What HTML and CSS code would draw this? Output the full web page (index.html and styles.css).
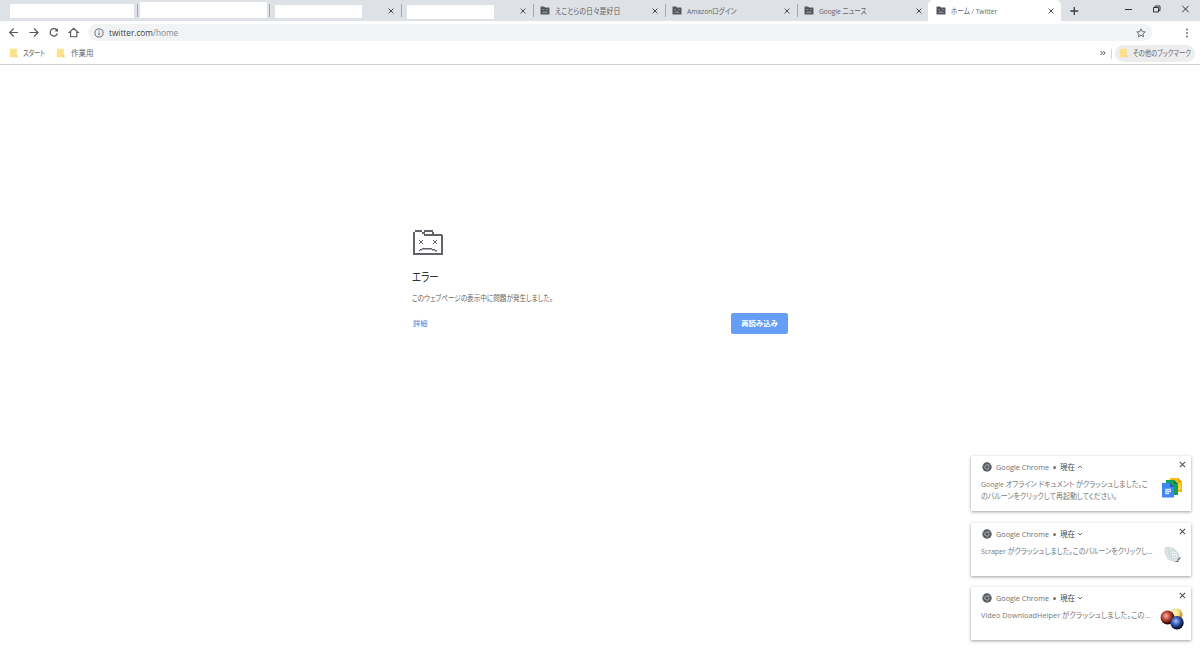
FILE: index.html
```html
<!DOCTYPE html>
<html lang="ja">
<head>
<meta charset="utf-8">
<title>ホーム / Twitter</title>
<link rel="stylesheet" href="styles.css">
</head>
<body>
<svg class="defs" width="0" height="0">
  <symbol id="x" viewBox="0 0 8 8"><path d="M1.6 1.6 6.4 6.4M6.4 1.6 1.6 6.4" fill="none" stroke="currentColor" stroke-width="1"/></symbol>
  <symbol id="sad" viewBox="0 0 10 9"><path d="M.5 1Q.5.5 1 .5H4L5 1.5H9Q9.5 1.5 9.5 2V8Q9.5 8.5 9 8.5H1Q.5 8.5.5 8Z" fill="#54585c"/><path d="M2.5 3.7h1.2M6.3 3.7h1.2M2.8 6.7Q5 5 7.2 6.7" fill="none" stroke="#b5b9bd" stroke-width=".8"/></symbol>
  <symbol id="folder" viewBox="0 0 9 10"><path d="M.8.7H7.800V7L8.400 7.500V9.300H.8Z" fill="#fde08a"/><path d="M7.400 7 8.400 7.400V9.300H6.800Z" fill="#f3d070"/></symbol>
  <symbol id="chrome" viewBox="0 0 10 10"><circle cx="5" cy="5" r="4.700" fill="#55595d"/><circle cx="5" cy="5" r="2.100" fill="#55595d" stroke="#c3c5c7" stroke-width=".7"/><path d="M5 2.800H9.100M3.100 6.100 1 2.500M6.900 6.100 4.800 9.700" stroke="#aaadb0" stroke-width=".6"/></symbol>
</svg>

<header>
  <div class="tabs">
    <div class="tab"><div class="blank b1"></div></div>
    <div class="tab"><div class="blank b2"></div></div>
    <div class="tab"><div class="blank b3"></div><svg class="close"><use href="#x"/></svg></div>
    <div class="tab"><div class="blank b4"></div><svg class="close"><use href="#x"/></svg></div>
    <div class="tab"><svg class="fav"><use href="#sad"/></svg><span class="t1">えことらの日々是好日</span><svg class="close"><use href="#x"/></svg></div>
    <div class="tab"><svg class="fav"><use href="#sad"/></svg><span class="t2">Amazonログイン</span><svg class="close"><use href="#x"/></svg></div>
    <div class="tab last"><svg class="fav"><use href="#sad"/></svg><span class="t3">Google ニュース</span><svg class="close"><use href="#x"/></svg></div>
    <div class="tab active"><svg class="fav"><use href="#sad"/></svg><span class="t4">ホーム / Twitter</span><svg class="close"><use href="#x"/></svg></div>
    <svg class="plus" width="10" height="10" viewBox="0 0 10 10"><path d="M5.300 1V9M1.300 5H9.300" stroke="#3c4043" stroke-width="1.300"/></svg>
    <svg class="win" width="76" height="18" viewBox="0 0 76 18" fill="none" stroke="#333" stroke-width="1"><path d="M5 9.500h7"/><path d="M33.500 7.500h5v4.500h-5zM35 7.500V6h5v4.500h-1.500"/><path d="M62.300 5.800l6.400 6.400M68.700 5.800l-6.400 6.400"/></svg>
  </div>

  <div class="toolbar">
    <svg class="nav" width="80" height="22" viewBox="0 0 80 22" fill="none" stroke="#55595e" stroke-width="1.200"><path d="M18 11.500H10M13.700 7.500l-4 4 4 4"/><path d="M29.500 11.500H38M34 7.500l4 4-4 4"/><path d="M57 9.400A3.700 3.700 0 1 0 57.400 12.500"/><path d="M58 7.200v3.400h-3.400z" fill="#55595e" stroke="none"/><path d="M69.200 11.500 73.700 7.300 78.200 11.500H76.800V15.700H70.600V11.500Z" stroke-width="1.100"/></svg>
    <div class="omnibox">
      <svg width="10" height="10" viewBox="0 0 10 10"><circle cx="5" cy="5" r="4.100" fill="none" stroke="#5f6368" stroke-width=".9"/><path d="M5 4.400V7.400M5 2.500v1.100" stroke="#5f6368"/></svg>
      <span class="url">twitter.com<i>/home</i></span>
      <svg class="star" width="10" height="10" viewBox="0 0 10 10"><path d="M5 .9 6.200 3.600 9.200 3.900 6.900 5.900 7.600 8.800 5 7.300 2.400 8.800 3.100 5.900.8 3.900 3.800 3.600Z" fill="none" stroke="#5f6368" stroke-width=".9"/></svg>
    </div>
    <svg class="menu" width="4" height="12" viewBox="0 0 4 12" fill="#5f6368"><circle cx="2" cy="2.500" r=".9"/><circle cx="2" cy="6" r=".9"/><circle cx="2" cy="9.500" r=".9"/></svg>
  </div>

  <div class="bookmarks">
    <svg class="folder"><use href="#folder"/></svg><span class="bm1">スタート</span>
    <svg class="folder"><use href="#folder"/></svg><span class="bm2">作業用</span>
    <svg class="more" width="6" height="6" viewBox="0 0 6 6"><path d="M.6 1 2.600 3 .6 5M3.200 1l2 2-2 2" fill="none" stroke="#4d5156"/></svg>
    <div class="other"><svg class="folder"><use href="#folder"/></svg><span class="bm3">その他のブックマーク</span></div>
  </div>
</header>

<main>
  <svg class="folder-face" width="32" height="27" viewBox="0 0 32 27"><path d="M1 2H3V0H10V2H12V0H21V2H22V4H30V5H31V25H1ZM3 2V23H29V6H12V4H10V2ZM13 2V4H20V2Z" fill="#606367" fill-rule="evenodd"/><path d="M7 10h1v1h2v-1h1v1h-1v2h1v1h-1v-1H8v1H7v-1h1v-2H7zM21 10h1v1h2v-1h1v1h-1v2h1v1h-1v-1h-2v1h-1v-1h1v-2h-1zM10 18H20V19.400H10zM8 19h2v1.400H8zM7 20h1v1H7zM20 19h3v1.400h-3zM23 20h2v1.400h-2z" fill="#606367"/></svg>
  <h1><span class="h">エラー</span></h1>
  <p><span class="m">このウェブページの表示中に問題が発生しました。</span></p>
  <div class="actions"><a>詳細</a><button>再読み込み</button></div>
</main>

<aside>
  <section class="note first">
    <div class="head"><svg class="logo"><use href="#chrome"/></svg><span class="app">Google Chrome</span><b>•</b><span class="now">現在</span><svg class="chev" viewBox="0 0 6 6"><path d="M1 4 3 2 5 4"/></svg><svg class="close"><use href="#x"/></svg></div>
    <div class="content"><p><span class="n1">Google オフライン ドキュメント がクラッシュしました。こ</span><br><span class="n2">のバルーンをクリックして再起動してください。</span></p>
    <svg class="pic" width="24" height="24" viewBox="0 0 24 24"><path d="M10 2H18L22 6V16H10Z" fill="#fbbc05"/><path d="M18 2V6H22Z" fill="#de9d00"/><path d="M18 9h2v4h-2" stroke="#fff" fill="none" opacity=".6"/><path d="M6 4H14L18 8V19H6Z" fill="#12a05c"/><path d="M14 4V8H18Z" fill="#087a43"/><path d="M2 7H10L14 11V21.500H2Z" fill="#4285f4"/><path d="M10 7V11H14Z" fill="#1c58bd"/><path d="M5 13.500h6M5 15.500h6M5 17.500h4" stroke="#dbe7fc" stroke-width="1.300"/></svg></div>
  </section>
  <section class="note second">
    <div class="head"><svg class="logo"><use href="#chrome"/></svg><span class="app">Google Chrome</span><b>•</b><span class="now">現在</span><svg class="chev" viewBox="0 0 6 6"><path d="M1 2 3 4 5 2"/></svg><svg class="close"><use href="#x"/></svg></div>
    <div class="content"><p><span class="n3">Scraper がクラッシュしました。このバルーンをクリックし...</span></p>
    <svg class="pic" width="24" height="24" viewBox="0 0 24 24"><path d="M5 5 8 4 14 5.500 19 12 19.500 17 14 18.500 8 16 5 10Z" fill="#dce8e7" stroke="#c5d4d2" stroke-width=".7"/><path d="M8 5 10 15M11 7 17 9 18 15 12 16Z" fill="#edf4f3" stroke="#b3c8c5" stroke-width=".6"/><path d="M13 10l3 1M13 13l3 .5" stroke="#c2d2d0"/><path d="M17.500 17.500 20.500 14.500M15.500 18.500h3" stroke="#69716f" stroke-width="1.200"/></svg></div>
  </section>
  <section class="note third">
    <div class="head"><svg class="logo"><use href="#chrome"/></svg><span class="app">Google Chrome</span><b>•</b><span class="now">現在</span><svg class="chev" viewBox="0 0 6 6"><path d="M1 2 3 4 5 2"/></svg><svg class="close"><use href="#x"/></svg></div>
    <div class="content"><p><span class="n4">Video DownloadHelper がクラッシュしました。この...</span></p>
    <svg class="pic" width="24" height="24" viewBox="0 0 24 24"><defs><radialGradient id="gy" cx=".4" cy=".35"><stop stop-color="#fffbd8"/><stop offset=".7" stop-color="#f5dc78"/><stop offset="1" stop-color="#c99b30"/></radialGradient><radialGradient id="gr" cx=".4" cy=".38" r=".6"><stop stop-color="#f8b4a5"/><stop offset=".5" stop-color="#bd4331"/><stop offset="1" stop-color="#240402"/></radialGradient><radialGradient id="gb" cx=".42" cy=".38" r=".6"><stop stop-color="#aac2f7"/><stop offset=".5" stop-color="#3659b7"/><stop offset="1" stop-color="#02040f"/></radialGradient></defs><circle cx="16" cy="8" r="6.500" fill="url(#gy)"/><circle cx="7.500" cy="10.500" r="6.900" fill="url(#gr)"/><circle cx="17" cy="15.700" r="6.700" fill="url(#gb)"/></svg></div>
  </section>
</aside>
</body>
</html>
```

FILE: styles.css
```css
* { box-sizing: border-box; }
body { margin: 0; width: 1200px; height: 650px; overflow: hidden; position: relative; background: #fff; color: #5f6368; font: 8px/12px "Open Sans", "Noto Sans CJK JP", sans-serif; font-feature-settings: "palt"; white-space: nowrap; }
svg { display: block; flex: none; }
.defs { position: absolute; }
span { display: inline-block; transform-origin: 0 50%; }
header { height: 65px; border-bottom: 1px solid #cfd0d2; }
.tabs { display: flex; height: 21px; padding-left: 5px; background: #dee1e6; }
.tab { position: relative; display: flex; align-items: center; width: 132px; height: 21px; padding-left: 3px; }
.tab:not(.active):not(.last)::after { content: ""; position: absolute; right: -1px; top: 4px; width: 1px; height: 13px; background: #a5a8ad; }
.tab .close { width: 8px; height: 8px; margin: 0 6px 0 auto; color: #4a4e52; }
.fav { width: 10px; height: 9px; margin-right: 5px; }
.active { background: #fff; border-radius: 5px 5px 0 0; width: 133px; margin-left: -1px; padding-left: 8px; }
.active .close { margin-right: 6.500px; }
.tab:nth-child(n+5):not(.active) { padding-left: 7px; }
.blank { align-self: flex-start; background: #fff; }
.b1 { width: 124px; height: 14px; margin: 4px 0 0 2px; }
.b2 { width: 127px; height: 16px; margin: 2px 0 0 0; }
.b3 { width: 87px; height: 13px; margin: 5px 0 0 3px; }
.b4 { width: 87px; height: 14px; margin: 5px 0 0 3px; }
.t1 { transform: scaleX(.867); }
.t2 { transform: scaleX(.83); }
.t3 { transform: scaleX(.83); }
.t4 { transform: scaleX(.825); }
.plus { margin: 6px 0 0 8px; }
.win { margin-left: auto; margin-right: 4px; }
.toolbar { display: flex; height: 22px; align-items: center; }
.omnibox { display: flex; align-items: center; width: 1064px; height: 17px; margin: 1px 0 0 8px; padding: 0 6px; border-radius: 9px; background: #f1f3f4; }
.url { margin-left: 5px; color: #3c4043; font-size: 9px; transform: scaleX(.915); }
.url i { font-style: normal; color: #858a8f; }
.star { margin-left: auto; }
.menu { margin: 1px 0 0 32.500px; }
.bookmarks { display: flex; height: 20px; align-items: center; padding-left: 9px; }
.folder { width: 9px; height: 10px; }
.bm1, .bm2 { margin-left: 5px; }
.bm1 { width: 33px; transform: scaleX(.78); }
.bm2 { margin-left: 6px; transform: scaleX(.94); }
.more { margin-left: auto; }
.other { display: flex; align-items: center; position: relative; width: 80px; height: 17px; margin: 0 5px 0 9px; padding-left: 4px; border-radius: 9px; background: #ededee; }
.other::before { content: ""; position: absolute; left: -4px; top: 4px; width: 1px; height: 10px; background: #d0d2d4; }
.bm3 { margin-left: 5px; transform: scaleX(.79); }
main { width: 376px; margin: 165px 0 0 412px; }
.folder-face { margin-left: -.500px; }
h1 { margin: 12px 0 0; color: #333; font-size: 12px; line-height: 18px; font-weight: 400; }
.h { transform: scaleX(.79); }
main p { margin: 5px 0 0; color: #646464; }
.m { transform: scaleX(.825); }
.actions { display: flex; justify-content: space-between; align-items: center; margin-top: 9px; }
.actions a { margin: -1px 0 0 1px; color: #4b7bd8; font-size: 7.200px; }
button { width: 57px; height: 21px; padding: 0 0 1px; border: 0; border-radius: 2px; background: #669df6; color: #fff; font: 700 7.300px "Noto Sans CJK JP", sans-serif; }
aside { position: absolute; left: 971px; top: 456px; width: 220px; color: #777; }
.note { background: #fff; box-shadow: 0 1px 3px rgba(0,0,0,.38); }
.first { height: 55px; margin-bottom: 12px; }
.second { height: 53px; margin-bottom: 11px; }
.third { height: 53px; }
.head { display: flex; height: 18px; align-items: center; padding: 4px 5px 0 11px; }
.logo { width: 10px; height: 10px; margin: 0 4px 0 0; }
.app { width: 57px; color: #6b6f73; transform: scaleX(.91); }
.head b { width: 7px; padding-top: 1px; color: #555; }
.now { color: #404448; width: 17px; transform: scaleX(.94); }
.chev { width: 6px; height: 6px; fill: none; stroke: #6a6e72; }
.note .close { width: 9px; height: 9px; margin: -6px -1px 0 auto; color: #555; }
.content { display: flex; padding: 4px 7px 0 10px; }
.content p { margin: 0; width: 180px; }
.n1 { transform: scaleX(.877); }
.n2 { transform: scaleX(.873); }
.n3 { transform: scaleX(.869); }
.n4 { transform: scaleX(.92); }
.pic { margin: -2px 0 0 -1px; }
```
